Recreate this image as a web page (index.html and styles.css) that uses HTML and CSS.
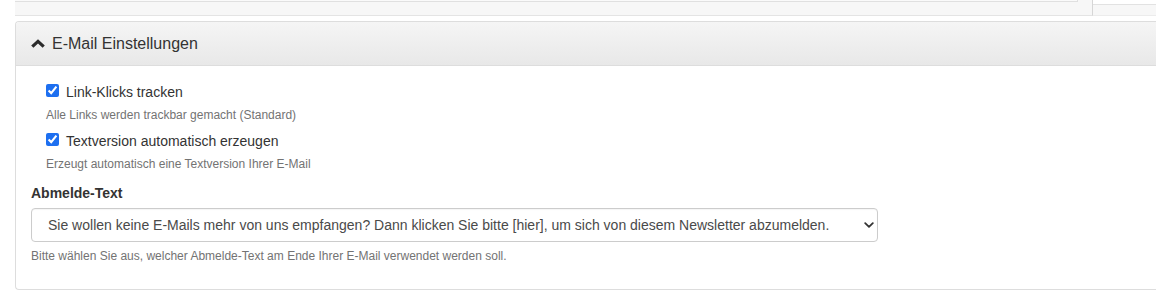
FILE: index.html
```html
<!DOCTYPE html>
<html lang="de">
<head>
<meta charset="utf-8">
<title>E-Mail Einstellungen</title>
<link rel="stylesheet" href="styles.css">
</head>
<body>
<div class="top-strip">
  <div class="prev-panel">
    <div class="prev-row"></div>
  </div>
  <div class="prev-side"></div>
</div>

<section class="panel">
  <div class="panel-heading">
    <svg class="chev-up" width="14" height="9" viewBox="0 0 14 9" aria-hidden="true">
      <path d="M0.2 6.6 L7 0.2 L13.8 6.6 L11.6 8.8 L7 4.5 L2.4 8.8 Z" fill="#2b2b2b"/>
    </svg>
    <span class="panel-title">E-Mail Einstellungen</span>
  </div>
  <div class="panel-body">
    <div class="check-group">
      <label class="check">
        <input type="checkbox" checked>
        <span>Link-Klicks tracken</span>
      </label>
      <p class="help">Alle Links werden trackbar gemacht (Standard)</p>
    </div>
    <div class="check-group second">
      <label class="check">
        <input type="checkbox" checked>
        <span>Textversion automatisch erzeugen</span>
      </label>
      <p class="help">Erzeugt automatisch eine Textversion Ihrer E-Mail</p>
    </div>

    <div class="form-group">
      <label class="field-label" for="abmelde">Abmelde-Text</label>
      <div class="select-wrap">
        <select id="abmelde" class="select">
          <option>Sie wollen keine E-Mails mehr von uns empfangen? Dann klicken Sie bitte [hier], um sich von diesem Newsletter abzumelden.</option>
        </select>
        <svg class="select-chev" width="10" height="6" viewBox="0 0 10 6" aria-hidden="true">
          <path d="M1.2 1.2 L5 4.8 L8.8 1.2" fill="none" stroke="#333" stroke-width="1.8" stroke-linecap="round" stroke-linejoin="round"/>
        </svg>
      </div>
      <p class="help help-field">Bitte wählen Sie aus, welcher Abmelde-Text am Ende Ihrer E-Mail verwendet werden soll.</p>
    </div>
  </div>
</section>
</body>
</html>
```
FILE: styles.css
```css
* { box-sizing: border-box; }

html, body {
  margin: 0;
  padding: 0;
  background: #ffffff;
  overflow: hidden;
}

body {
  font-family: "Liberation Sans", Arial, Helvetica, sans-serif;
  color: #333333;
  font-size: 14px;
}

/* remains of the panel above */
.top-strip {
  display: flex;
  height: 16px;
  margin-left: 15px;
}

.prev-panel {
  width: 1078px;
  background: #f7f7f7;
  border-bottom: 1px solid #e4e4e4;
  border-right: 1px solid #d6d6d6;
}

.prev-row {
  width: 1063px;
  height: 2px;
  border-bottom: 1px solid #e0e0e0;
  border-right: 1px solid #e0e0e0;
  background: #fafafa;
}

.prev-side {
  flex: 1;
  margin-top: 4px;
  background: #f7f7f7;
  border-top: 1px solid #e2e2e2;
  border-bottom: 1px solid #ececec;
}

/* panel */
.panel {
  margin: 5px 0 0 15px;
  border: 1px solid #dddddd;
  border-right: none;
  border-radius: 4px 0 0 4px;
  background: #ffffff;
}

.panel-heading {
  display: flex;
  align-items: center;
  gap: 7px;
  height: 44px;
  padding: 0 15px;
  background: linear-gradient(to bottom, #f5f5f5 0%, #e8e8e8 100%);
  border-bottom: 1px solid #dddddd;
  border-radius: 3px 0 0 0;
}

.chev-up {
  display: block;
  flex: none;
  margin-top: -1px;
}

.panel-title {
  font-size: 16px;
  line-height: 20px;
  color: #333333;
}

.panel-body {
  padding: 16px 15px 24px 15px;
}

/* checkboxes */
.check-group {
  margin-left: 15px;
}

.check-group.second {
  margin-top: 7px;
}

.check {
  display: flex;
  align-items: flex-start;
  font-size: 14px;
  line-height: 20px;
  color: #333333;
}

.check input {
  width: 13px;
  height: 13px;
  margin: 2px 7px 0 0;
  accent-color: #1d6ff0;
  flex: none;
}

.help {
  margin: 5px 0 0 0;
  font-size: 12px;
  line-height: 17px;
  color: #737373;
}

/* select field */
.form-group {
  margin-top: 10px;
}

.field-label {
  display: block;
  font-weight: bold;
  font-size: 14px;
  line-height: 20px;
  color: #333333;
}

.select-wrap {
  position: relative;
  width: 847px;
  margin-top: 5px;
}

.select {
  display: block;
  width: 100%;
  height: 34px;
  padding: 0 36px 0 16px;
  border: 1px solid #cccccc;
  border-radius: 4px;
  background: #ffffff;
  font-family: "Liberation Sans", Arial, Helvetica, sans-serif;
  font-size: 14px;
  color: #4a4a4a;
  -webkit-appearance: none;
  appearance: none;
  box-shadow: inset 0 1px 1px rgba(0, 0, 0, 0.04);
}

.select-chev {
  position: absolute;
  top: 14px;
  right: 4px;
  display: block;
  pointer-events: none;
}

.help-field {
  margin-top: 6px;
}
```
